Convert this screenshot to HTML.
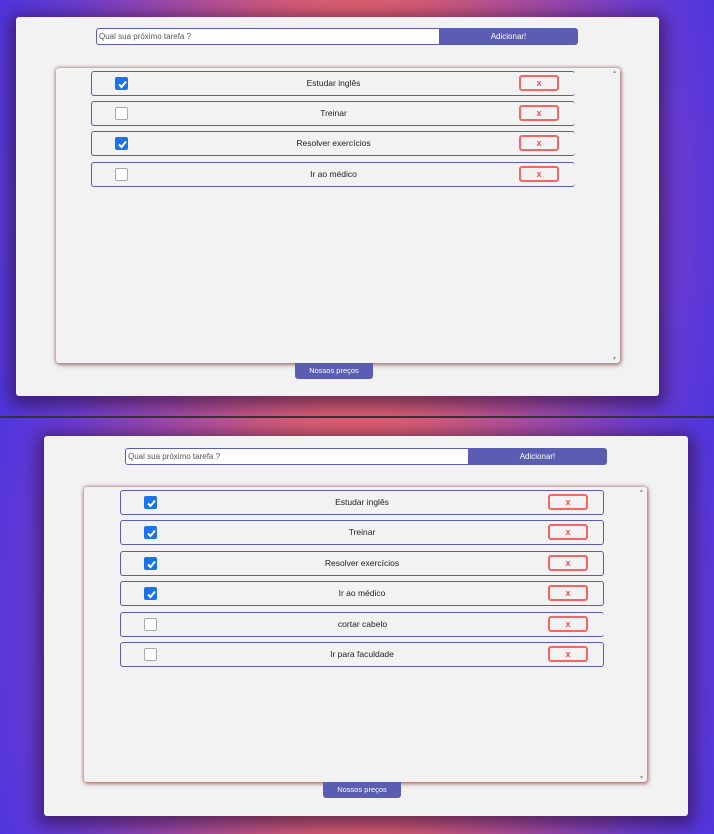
<!DOCTYPE html>
<html><head><meta charset="utf-8"><style>
*{box-sizing:border-box;margin:0;padding:0}
body{width:714px;height:834px;overflow:hidden;font-family:"Liberation Sans",sans-serif;position:relative;background:#333}
.pane{position:absolute;left:0;width:714px;height:416px;overflow:hidden;
background:radial-gradient(ellipse 420px 620px at 50% 50%,#e4606e 0%,#e0606e 32%,#a04aa8 55%,#6a3cd0 75%,#4030e6 100%)}
.card{position:absolute;background:#f2f2f2;width:644px;height:380px;border-radius:3px;box-shadow:0 4px 16px 6px rgba(40,15,60,.6)}
.inp{position:absolute;height:17px;width:344px;background:#fff;border:1.5px solid #5b5db5;border-right:none;border-radius:3px 0 0 3px;font-size:8px;color:#555;padding:2px 2px;line-height:11px}
.add{position:absolute;height:17px;width:139px;background:#5b5db3;border-radius:0 3px 3px 0;color:#fff;font-size:8px;text-align:center;line-height:17px}
.list{position:absolute;width:564px;height:295px;background:#f2f2f2;border-radius:3px;box-shadow:0 0 3px 1px rgba(150,80,80,.55),1px 2px 4px rgba(120,60,60,.5)}
.sa{position:absolute;right:3px;font-size:5px;color:#999}
.row{position:absolute;width:484px;height:25px;border:1.5px solid #5b5db5;border-radius:3px;font-size:8.5px;color:#222;text-align:center;line-height:22px}
.cb{position:absolute;left:23px;top:5px;width:13px;height:13px;border:1px solid #aaa;background:#fff;border-radius:2px}
.cb.on{background:#1a73e8;border-color:#1a73e8}
.cb.on svg{position:absolute;left:1px;top:1px}
.x{position:absolute;left:427px;top:3px;width:40px;height:16px;border:2px solid #f26666;border-radius:3px;color:#f05050;font-size:9px;font-weight:bold;line-height:12px;text-align:center}
.np{position:absolute;width:78px;height:16px;background:#5b5db3;border-radius:0 0 3px 3px;color:#fff;font-size:7.5px;text-align:center;line-height:16px}
</style></head><body>

<div class="pane" style="top:0">
 <div class="card" style="left:16px;top:17px;width:643px;height:379px"></div>
 <div class="inp" style="left:96px;top:28px;width:343px">Qual sua próximo tarefa ?</div>
 <div class="add" style="left:439px;top:28px">Adicionar!</div>
 <div class="list" style="left:56px;top:68px">
  <div class="sa" style="top:1px">▲</div><div class="sa" style="bottom:1px">▼</div>
 </div>
 <div class="row" style="left:91px;top:71px;border-right:none"><div class="cb on"><svg width="11" height="11" viewBox="0 0 11 11"><path d="M2 5.5L4.5 8L9 2.5" stroke="#fff" stroke-width="2" fill="none"/></svg></div>Estudar inglês<div class="x">x</div></div>
 <div class="row" style="left:91px;top:101px;border-right:none"><div class="cb"></div>Treinar<div class="x">x</div></div>
 <div class="row" style="left:91px;top:131px;border-right:none"><div class="cb on"><svg width="11" height="11" viewBox="0 0 11 11"><path d="M2 5.5L4.5 8L9 2.5" stroke="#fff" stroke-width="2" fill="none"/></svg></div>Resolver exercícios<div class="x">x</div></div>
 <div class="row" style="left:91px;top:162px;border-right:none"><div class="cb"></div>Ir ao médico<div class="x">x</div></div>
 <div class="np" style="left:295px;top:363px">Nossos preços</div>
</div>

<div class="pane" style="top:418px">
 <div class="card" style="left:44px;top:18px"></div>
 <div class="inp" style="left:125px;top:30px;width:343px">Qual sua próximo tarefa ?</div>
 <div class="add" style="left:468px;top:30px">Adicionar!</div>
 <div class="list" style="left:84px;top:69px;width:563px">
  <div class="sa" style="top:1px">▲</div><div class="sa" style="bottom:1px">▼</div>
 </div>
 <div class="row" style="left:120px;top:72px"><div class="cb on"><svg width="11" height="11" viewBox="0 0 11 11"><path d="M2 5.5L4.5 8L9 2.5" stroke="#fff" stroke-width="2" fill="none"/></svg></div>Estudar inglês<div class="x">x</div></div>
 <div class="row" style="left:120px;top:102px"><div class="cb on"><svg width="11" height="11" viewBox="0 0 11 11"><path d="M2 5.5L4.5 8L9 2.5" stroke="#fff" stroke-width="2" fill="none"/></svg></div>Treinar<div class="x">x</div></div>
 <div class="row" style="left:120px;top:133px"><div class="cb on"><svg width="11" height="11" viewBox="0 0 11 11"><path d="M2 5.5L4.5 8L9 2.5" stroke="#fff" stroke-width="2" fill="none"/></svg></div>Resolver exercícios<div class="x">x</div></div>
 <div class="row" style="left:120px;top:163px"><div class="cb on"><svg width="11" height="11" viewBox="0 0 11 11"><path d="M2 5.5L4.5 8L9 2.5" stroke="#fff" stroke-width="2" fill="none"/></svg></div>Ir ao médico<div class="x">x</div></div>
 <div class="row" style="left:120px;top:194px;border-right:none"><div class="cb"></div>cortar cabelo<div class="x">x</div></div>
 <div class="row" style="left:120px;top:224px"><div class="cb"></div>Ir para faculdade<div class="x">x</div></div>
 <div class="np" style="left:323px;top:364px">Nossos preços</div>
</div>
</body></html>
